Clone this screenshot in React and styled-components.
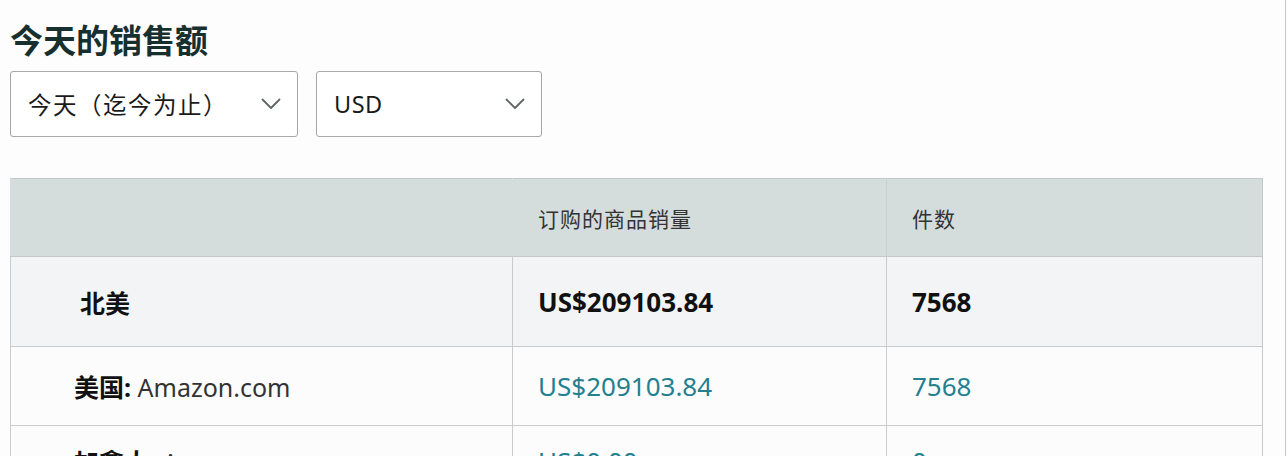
import React from 'react';
import styled, { createGlobalStyle } from 'styled-components';

const GlobalStyle = createGlobalStyle`
  html, body {
    margin: 0;
    padding: 0;
    background: #fdfdfd;
  }
  body {
    font-family: "Noto Sans", "Noto Sans CJK SC", sans-serif;
    color: #111;
  }
`;

const Page = styled.div`
  box-sizing: border-box;
  width: 1286px;
  height: 456px;
  overflow: hidden;
  padding: 0 0 0 10px;
  border-right: 1px solid #c4c6c8;
`;

const Title = styled.h1`
  margin: 0 0 11px;
  padding-top: 19px;
  font-family: "Noto Sans CJK SC", sans-serif;
  font-size: 33px;
  line-height: 41px;
  font-weight: 700;
  color: #17302f;
`;

const Filters = styled.div`
  display: flex;
  gap: 18px;
`;

const Select = styled.div`
  box-sizing: border-box;
  width: ${props => props.width}px;
  height: 66px;
  display: flex;
  align-items: center;
  justify-content: space-between;
  padding: 0 16px 0 17px;
  border: 1px solid #a5a9aa;
  border-radius: 3px;
  background: #fff;
  font-family: "Noto Sans", "Noto Sans CJK SC", sans-serif;
  font-size: 23.5px;
  letter-spacing: ${props => (props.$cjk ? 1.5 : 0.5)}px;
  color: #1a1a1a;
  svg {
    width: 20px;
    height: 20px;
    color: #5f6465;
  }
`;

const Chevron = () => (
  <svg viewBox="0 0 20 20" fill="none" stroke="currentColor" strokeWidth="1.8" strokeLinecap="round" strokeLinejoin="round">
    <path d="M1.5 5.5l8.5 8.5 8.5-8.5" />
  </svg>
);

const Table = styled.table`
  margin-top: 41px;
  width: 1253px;
  border-collapse: collapse;
  table-layout: fixed;
  border: 1px solid #c5c8c9;
  font-family: "Noto Sans", "Noto Sans CJK SC", sans-serif;
`;

const Head = styled.th`
  height: 77px;
  padding: 0 0 0 25px;
  text-align: left;
  font-family: "Noto Sans CJK SC", sans-serif;
  font-weight: 400;
  font-size: 21px;
  letter-spacing: 1px;
  color: #333;
  background: #d5dcdc;
  border-left: 1px solid ${props => (props.$divider ? '#c9d0d0' : '#d5dcdc')};
  border-bottom: 1px solid #c5c8c9;
`;

const Row = styled.tr`
  height: ${props => props.$height}px;
  background: ${props => (props.$shade ? '#f3f4f5' : '#fcfcfc')};
  td {
    border-bottom: 1px solid #c9cbcc;
    border-left: 1px solid #c9cbcc;
  }
`;

const Cell = styled.td`
  padding: 0 0 0 ${props => props.$indent || 25}px;
  vertical-align: ${props => (props.$top ? 'top' : 'middle')};
  padding-top: ${props => (props.$top ? 17 : 0)}px;
  font-size: ${props => (props.$label ? 25 : 26)}px;
  font-weight: ${props => (props.$bold ? 700 : 400)};
  color: ${props => (props.$link ? '#23808f' : '#111')};
  white-space: nowrap;
`;

const Strong = styled.span`
  font-weight: 700;
  color: #111;
`;

const Plain = styled.span`
  color: #333;
`;

export default function App() {
  return (
    <>
      <GlobalStyle />
      <Page>
        <Title>今天的销售额</Title>
        <Filters>
          <Select width={288} $cjk>
            <span>今天（迄今为止）</span>
            <Chevron />
          </Select>
          <Select width={226}>
            <span>USD</span>
            <Chevron />
          </Select>
        </Filters>
        <Table>
          <colgroup>
            <col style={{ width: 502 }} />
            <col style={{ width: 374 }} />
            <col />
          </colgroup>
          <thead>
            <tr>
              <Head />
              <Head>订购的商品销量</Head>
              <Head $divider>件数</Head>
            </tr>
          </thead>
          <tbody>
            <Row $height={90} $shade>
              <Cell $indent={69} $label $bold>北美</Cell>
              <Cell $bold>US$209103.84</Cell>
              <Cell $bold>7568</Cell>
            </Row>
            <Row $height={79}>
              <Cell $indent={63} $label>
                <Strong>美国:</Strong> <Plain>Amazon.com</Plain>
              </Cell>
              <Cell $link>US$209103.84</Cell>
              <Cell $link>7568</Cell>
            </Row>
            <Row $height={79}>
              <Cell $indent={63} $label $top>
                <Strong>加拿大:</Strong> <Plain>Amazon.ca</Plain>
              </Cell>
              <Cell $link $top>US$0.00</Cell>
              <Cell $link $top>0</Cell>
            </Row>
          </tbody>
        </Table>
      </Page>
    </>
  );
}
